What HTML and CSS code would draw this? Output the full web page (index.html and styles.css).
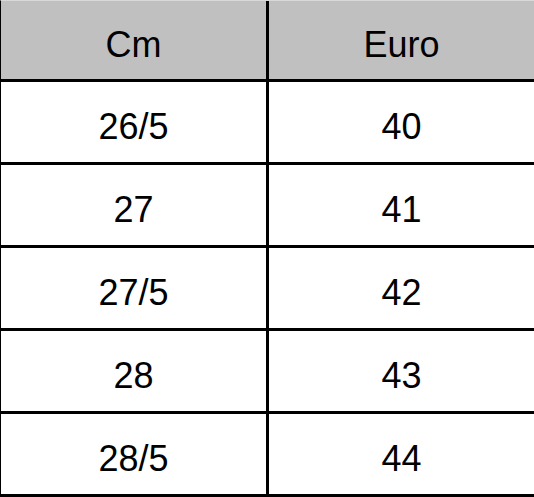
FILE: index.html
```html
<!DOCTYPE html>
<html>
<head>
<meta charset="utf-8">
<link rel="stylesheet" href="styles.css">
</head>
<body>
<div class="sheet">
  <div class="cell head">Cm</div>
  <div class="cell head">Euro</div>
  <div class="cell">26/5</div>
  <div class="cell">40</div>
  <div class="cell">27</div>
  <div class="cell">41</div>
  <div class="cell">27/5</div>
  <div class="cell">42</div>
  <div class="cell">28</div>
  <div class="cell">43</div>
  <div class="cell">28/5</div>
  <div class="cell">44</div>
</div>
</body>
</html>
```
FILE: styles.css
```css
html, body {
  margin: 0;
  padding: 0;
  background: #ffffff;
}
.sheet {
  width: 533px;
  border-left: 1px solid #000000;
  border-top: 1px solid #d9d9d9;
  background: #000000;
  display: grid;
  grid-template-columns: 265px 1fr;
  grid-template-rows: 78px repeat(5, 80px);
  column-gap: 3px;
  row-gap: 3px;
  padding-bottom: 3px;
  font-family: "Liberation Sans", Arial, sans-serif;
  font-size: 36px;
  color: #000000;
}
.cell {
  background: #ffffff;
  display: flex;
  align-items: center;
  justify-content: center;
  padding-top: 9px;
  box-sizing: border-box;
}
.head {
  background: #c0c0c0;
  padding-top: 10px;
}
```
